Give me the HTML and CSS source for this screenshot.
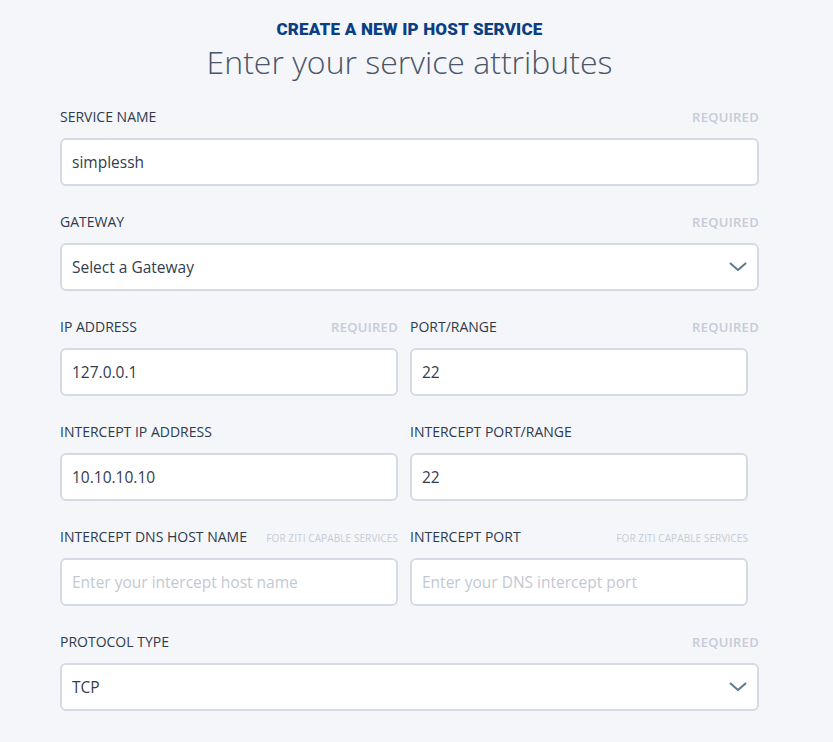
FILE: index.html
```html
<!DOCTYPE html>
<html lang="en">
<head>
<meta charset="utf-8">
<title>Create a new IP host service</title>
<link rel="stylesheet" href="styles.css">
</head>
<body>
<main class="page">
  <header class="header">
    <div class="eyebrow">CREATE A NEW IP HOST SERVICE</div>
    <h1 class="title">Enter your service attributes</h1>
  </header>

  <form class="form">
    <div class="field">
      <div class="label-row"><label class="label">SERVICE NAME</label><span class="note">REQUIRED</span></div>
      <input class="input" type="text" value="simplessh">
    </div>

    <div class="field">
      <div class="label-row"><label class="label">GATEWAY</label><span class="note">REQUIRED</span></div>
      <div class="select-wrap">
        <select class="input select"><option>Select a Gateway</option></select>
        <svg class="chevron" width="18" height="10" viewBox="0 0 18 10"><path d="M1.5 1.5 L9 8 L16.5 1.5" fill="none" stroke="#5b7a8a" stroke-width="2" stroke-linecap="round" stroke-linejoin="round"/></svg>
      </div>
    </div>

    <div class="row">
      <div class="field col">
        <div class="label-row"><label class="label">IP ADDRESS</label><span class="note">REQUIRED</span></div>
        <input class="input" type="text" value="127.0.0.1">
      </div>
      <div class="field col col-right">
        <div class="label-row"><label class="label">PORT/RANGE</label><span class="note">REQUIRED</span></div>
        <input class="input input-short" type="text" value="22">
      </div>
    </div>

    <div class="row">
      <div class="field col">
        <div class="label-row"><label class="label">INTERCEPT IP ADDRESS</label></div>
        <input class="input" type="text" value="10.10.10.10">
      </div>
      <div class="field col col-right">
        <div class="label-row"><label class="label">INTERCEPT PORT/RANGE</label></div>
        <input class="input input-short" type="text" value="22">
      </div>
    </div>

    <div class="row">
      <div class="field col">
        <div class="label-row"><label class="label">INTERCEPT DNS HOST NAME</label><span class="note small">FOR ZITI CAPABLE SERVICES</span></div>
        <input class="input" type="text" placeholder="Enter your intercept host name">
      </div>
      <div class="field col col-right">
        <div class="label-row short"><label class="label">INTERCEPT PORT</label><span class="note small">FOR ZITI CAPABLE SERVICES</span></div>
        <input class="input input-short" type="text" placeholder="Enter your DNS intercept port">
      </div>
    </div>

    <div class="field">
      <div class="label-row"><label class="label">PROTOCOL TYPE</label><span class="note">REQUIRED</span></div>
      <div class="select-wrap">
        <select class="input select"><option>TCP</option></select>
        <svg class="chevron" width="18" height="10" viewBox="0 0 18 10"><path d="M1.5 1.5 L9 8 L16.5 1.5" fill="none" stroke="#5b7a8a" stroke-width="2" stroke-linecap="round" stroke-linejoin="round"/></svg>
      </div>
    </div>

    <div class="field">
      <div class="label-row"><label class="label">ENDPOINT ATTRIBUTES</label></div>
    </div>
  </form>
</main>
</body>
</html>
```

FILE: styles.css
```css
* { box-sizing: border-box; }

html, body {
  margin: 0;
  padding: 0;
  background: #f4f6fa;
}

body {
  font-family: "Open Sans", "Noto Sans", sans-serif;
  color: #2f3a4c;
  overflow: hidden;
}

.page {
  width: 699px;
  margin-left: 60px;
}

.header {
  text-align: center;
  padding-top: 19px;
}

.eyebrow {
  font-family: Roboto, "Liberation Sans", sans-serif;
  font-weight: 900;
  font-size: 17px;
  line-height: 20px;
  letter-spacing: 0.2px;
  color: #0b3f82;
}

.title {
  margin: 3px 0 0;
  font-family: "Open Sans", sans-serif;
  font-weight: 300;
  font-size: 32px;
  line-height: 40px;
  color: #4a5568;
}

.form {
  margin-top: 26px;
}

.field {
  margin-bottom: 27px;
}

.label-row {
  display: flex;
  justify-content: space-between;
  align-items: baseline;
  height: 18px;
  margin-bottom: 12px;
}

.label-row.short {
  width: 338px;
}

.label {
  font-size: 14px;
  line-height: 18px;
  font-weight: 500;
  color: #2f3a4c;
}

.note {
  font-size: 13px;
  line-height: 18px;
  font-weight: 600;
  color: #c6cbd7;
  letter-spacing: 0.3px;
}

.note.small {
  font-size: 10px;
  font-weight: 500;
  letter-spacing: 0.1px;
}

.input {
  display: block;
  width: 100%;
  height: 48px;
  padding: 0 10px;
  border: 2px solid #d6dae4;
  border-radius: 6px;
  background: #ffffff;
  font-family: "Open Sans", sans-serif;
  font-size: 15.5px;
  color: #333d4e;
  outline: none;
}

.input::placeholder {
  color: #c3c8d4;
}

.input-short {
  width: 338px;
}

.row {
  display: flex;
  gap: 12px;
}

.col {
  width: 338px;
  flex: none;
}

.col-right {
  width: 349px;
}

.select-wrap {
  position: relative;
}

.select {
  appearance: none;
  -webkit-appearance: none;
}

.chevron {
  position: absolute;
  right: 12px;
  top: 19px;
}
```
